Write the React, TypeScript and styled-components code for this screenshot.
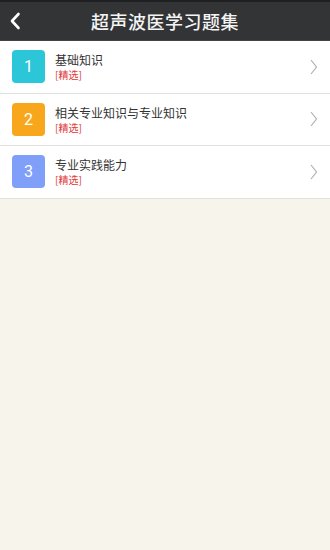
import React from 'react';
import styled, { createGlobalStyle } from 'styled-components';

const GlobalStyle = createGlobalStyle`
  html, body {
    margin: 0;
    padding: 0;
    background: #f7f4ec;
    font-family: "Noto Sans CJK SC", "Noto Sans", sans-serif;
  }
`;

const Page = styled.div`
  width: 330px;
  min-height: 550px;
  background: #f7f4ec;
`;

const TopBar = styled.header`
  height: 41px;
  background: #323436;
  border-top: 2px solid #1f2022;
  box-sizing: border-box;
  display: flex;
  align-items: center;
  border-bottom: 1px solid #444;
`;

const BackButton = styled.div`
  width: 34px;
  display: flex;
  justify-content: flex-start;
  padding-left: 9px;
  box-sizing: border-box;
`;

const Title = styled.h1`
  flex: 1;
  margin: 0 34px 0 0;
  text-align: center;
  color: #f4f4f4;
  font-size: 18px;
  font-weight: 500;
  letter-spacing: 0.5px;
`;

const List = styled.ul`
  list-style: none;
  margin: 0;
  padding: 0;
  background: #fff;
`;

const Row = styled.li`
  height: 52.5px;
  display: flex;
  align-items: center;
  padding: 0 12px;
  border-bottom: 1px solid #e2e2e2;
  box-sizing: border-box;
`;

const Badge = styled.div<{ $color: string }>`
  width: 33px;
  height: 33px;
  border-radius: 4px;
  background: ${(p) => p.$color};
  color: #fff;
  font-family: "Roboto", "Noto Sans", sans-serif;
  font-size: 16px;
  display: flex;
  align-items: center;
  justify-content: center;
`;

const Texts = styled.div`
  flex: 1;
  margin-left: 10px;
  display: flex;
  flex-direction: column;
`;

const Name = styled.div`
  font-size: 12px;
  color: #333;
  line-height: 16px;
`;

const Tag = styled.div`
  font-size: 10px;
  color: #e2383a;
  line-height: 13px;
`;

type Chapter = {
  num: number;
  name: string;
  color: string;
};

const chapters: Chapter[] = [
  { num: 1, name: '基础知识', color: '#2bc6d8' },
  { num: 2, name: '相关专业知识与专业知识', color: '#f8a71c' },
  { num: 3, name: '专业实践能力', color: '#7f9ff9' },
];

const App = () => {
  return (
    <Page>
      <GlobalStyle />
      <TopBar>
        <BackButton>
          <svg width="12" height="18" viewBox="0 0 12 18">
            <path d="M9.5 2 L3 9 L9.5 16" stroke="#fff" strokeWidth="2.6" fill="none" strokeLinecap="round" strokeLinejoin="round" />
          </svg>
        </BackButton>
        <Title>超声波医学习题集</Title>
      </TopBar>
      <List>
        {chapters.map((c) => (
          <Row key={c.num}>
            <Badge $color={c.color}>{c.num}</Badge>
            <Texts>
              <Name>{c.name}</Name>
              <Tag>[精选]</Tag>
            </Texts>
            <svg width="8" height="16" viewBox="0 0 8 16">
              <path d="M1 1 L6.5 8 L1 15" stroke="#b0b0b0" strokeWidth="1.2" fill="none" />
            </svg>
          </Row>
        ))}
      </List>
    </Page>
  );
};

export default App;
